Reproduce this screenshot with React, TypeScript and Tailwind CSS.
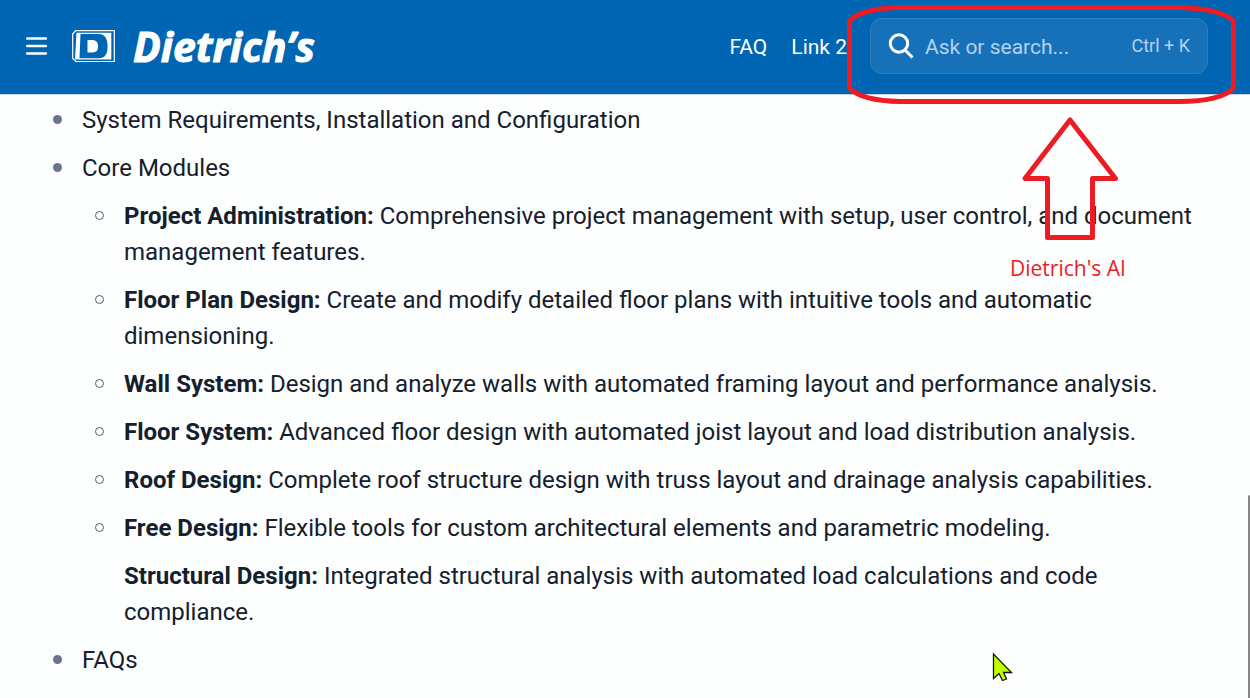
import React from "react";

type Module = { name: string; text: string; bullet?: boolean };

const modules: Module[] = [
  { name: "Project Administration:", text: "Comprehensive project management with setup, user control, and document management features." },
  { name: "Floor Plan Design:", text: "Create and modify detailed floor plans with intuitive tools and automatic dimensioning." },
  { name: "Wall System:", text: "Design and analyze walls with automated framing layout and performance analysis." },
  { name: "Floor System:", text: "Advanced floor design with automated joist layout and load distribution analysis." },
  { name: "Roof Design:", text: "Complete roof structure design with truss layout and drainage analysis capabilities." },
  { name: "Free Design:", text: "Flexible tools for custom architectural elements and parametric modeling." },
  { name: "Structural Design:", text: "Integrated structural analysis with automated load calculations and code compliance.", bullet: false },
];

function LogoMark() {
  return (
    <svg width="43" height="33" viewBox="0 0 43 33" aria-hidden="true">
      <path d="M3.5 .7H42.300V31.500H4L.7 28.500V4Z" fill="none" stroke="#fff" strokeWidth="1.200" />
      <path d="M4.500 2.800H39.300V29.500H3Z" fill="#fff" />
      <path d="M8.500 4H27C33.500 4.500 35.500 9 35.500 16.500C35.500 24 33 28 27 28.300H7.500Z" fill="#0065b3" />
      <path d="M15.500 10H21C24.500 10.500 26 12.500 26 16.300C26 20.500 24.500 22.500 20.500 22.500H15.500Z" fill="#fff" />
    </svg>
  );
}

function Header() {
  return (
    <header className="flex items-center border-b border-[#c5d3df] bg-[#0065b3] pt-[18px] pr-[42px] pb-5 pl-6 text-white">
      <button type="button" aria-label="Open menu" className="mr-6 flex h-6 w-6 items-center justify-center">
        <svg width="24" height="24" viewBox="0 0 24 24" fill="none" stroke="currentColor" strokeWidth="2.700" strokeLinecap="round" aria-hidden="true">
          <path d="M3.300 4.500H21.800M3.300 12H21.800M3.300 19.500H21.800" />
        </svg>
      </button>
      <a href="#home" className="flex items-center gap-[18px]">
        <LogoMark />
        <span className="font-['Open_Sans',sans-serif] text-[41px] leading-[48px] font-bold italic [-webkit-text-stroke:1px_#fff]">Dietrich’s</span>
      </a>
      <nav className="mr-[23px] ml-auto flex gap-6 pt-0.5 text-[21px] leading-8">
        <a href="#faq">FAQ</a>
        <a href="#link-2">Link 2</a>
      </nav>
      <label className="flex h-14 w-[338px] items-center rounded-xl border border-[#2d7fc1] bg-[#1771b9] px-[17px]">
        <svg width="26" height="26" viewBox="0 0 26 26" fill="none" stroke="currentColor" strokeWidth="3" aria-hidden="true">
          <circle cx="11" cy="10.500" r="8.700" />
          <path d="M17 17L24.500 24.500" />
        </svg>
        <input
          type="search"
          aria-label="Ask or search"
          placeholder="Ask or search..."
          className="ml-[11px] w-0 flex-1 bg-transparent pt-0.5 text-[21px] leading-8 outline-none placeholder:text-[#b4d2eb]"
        />
        <kbd className="font-[Roboto,sans-serif] text-lg text-[#b4d2eb]">Ctrl + K</kbd>
      </label>
    </header>
  );
}

function Bullet() {
  return <span className="mt-[13px] mr-5 h-[9px] w-[9px] shrink-0 rounded-full bg-[#67748a]" />;
}

function Annotations() {
  return (
    <div className="pointer-events-none absolute top-0 right-0 h-[290px] w-[410px] text-[#ed1c24]">
      <svg width="410" height="290" viewBox="840 0 410 290" fill="none" stroke="currentColor" strokeWidth="5" strokeLinejoin="round" aria-hidden="true">
        <path d="M849.500 21C858 12 875 8 900 7.500H1180C1205 8 1226 13 1233.500 21V88C1226 97 1205 101.500 1180 101.500H900C875 101 858 97 849.500 88Z" />
        <path d="M1070 120L1025 178.500H1047.500V237.500H1092.500V178.500H1115.500Z" />
      </svg>
      <span className="absolute top-[254px] left-[170px] font-['Open_Sans',sans-serif] text-[21px] leading-7 whitespace-nowrap">Dietrich's AI</span>
    </div>
  );
}

export default function App() {
  return (
    <div className="relative min-h-screen overflow-hidden bg-[#fdfefe] font-[Roboto,sans-serif] text-[#15202c]">
      <Header />
      <main className="pt-[7px] pr-10 pb-5 pl-[53px] text-2xl leading-9">
        <ul className="flex flex-col gap-3">
          <li className="flex"><Bullet />System Requirements, Installation and Configuration</li>
          <li>
            <div className="flex"><Bullet />Core Modules</div>
            <ul className="mt-3 flex flex-col gap-3 pl-[42px]">
              {modules.map((m) => (
                <li key={m.name} className="flex">
                  <span className={m.bullet === false ? "mr-5 w-[9px] shrink-0" : "mt-[13px] mr-5 h-[9px] w-[9px] shrink-0 rounded-full border border-[#4f5d73]"} />
                  <p><strong className="font-bold">{m.name}</strong> {m.text}</p>
                </li>
              ))}
            </ul>
          </li>
          <li className="flex"><Bullet />FAQs</li>
        </ul>
      </main>
      <Annotations />
      <div className="absolute right-0 bottom-0 h-[203px] w-0.5 rounded-tl-sm bg-[#858585]" />
      <svg className="absolute right-[236px] bottom-[15px]" width="22" height="31" viewBox="0 0 22 31" aria-hidden="true">
        <path d="M1.500 2V26.500L7 21.500L10.500 28.500L14.500 27L11.500 20.500H19.500Z" fill="#bfff00" stroke="#111" strokeWidth="1.300" />
      </svg>
    </div>
  );
}
